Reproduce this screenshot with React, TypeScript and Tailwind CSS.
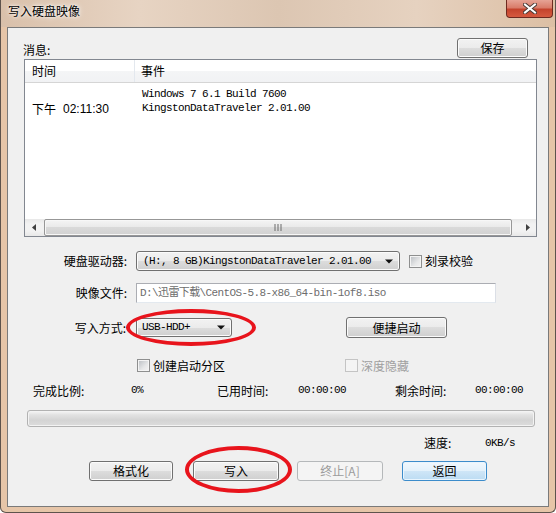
import React from "react";

const mono =
  "font-['Liberation_Mono','Noto_Sans_CJK_SC',monospace] text-[11px] tracking-[-0.6px] leading-none";

type BtnProps = {
  children: React.ReactNode;
  className?: string;
  variant?: "normal" | "default" | "disabled";
};

const WinButton: React.FC<BtnProps> = ({ children, className = "", variant = "normal" }) => {
  const look =
    variant === "default"
      ? "border-[#3c8ccb] bg-[linear-gradient(#f1f8fd_0%,#e3f1fb_50%,#cfe6f7_50%,#bcdcf3_100%)] shadow-[inset_0_0_0_1px_#e9f5fe]"
      : variant === "disabled"
      ? "border-[#b5b8ba] bg-[#f4f4f4] text-[#9c9c9c]"
      : "border-[#707070] bg-[linear-gradient(#f2f2f2_0%,#ebebeb_50%,#dddddd_50%,#cfcfcf_100%)] shadow-[inset_0_0_0_1px_#fbfbfb]";
  return (
    <div
      className={`flex items-center justify-center rounded-[3px] border text-[12px] leading-none ${look} ${className}`}
    >
      {children}
    </div>
  );
};

const Arrow: React.FC = () => (
  <svg width="8" height="5" viewBox="0 0 8 5" className="ml-auto shrink-0">
    <path d="M0 0.5h8L4 4.5z" fill="#111" />
  </svg>
);

const Check: React.FC<{ disabled?: boolean }> = ({ disabled }) => (
  <span
    className={`block h-[13px] w-[13px] shrink-0 border ${
      disabled
        ? "border-[#c4c4c4] bg-[#f4f4f4]"
        : "border-[#8e8f8f] bg-[linear-gradient(135deg,#b8bcc1,#e6e7e8_60%,#f4f4f4)] shadow-[inset_0_0_0_1px_#f4f4f4]"
    }`}
  />
);

const App: React.FC = () => {
  return (
    <div className="relative h-[513px] w-[556px] overflow-hidden rounded-b-[6px] border-x border-b border-[#5e534c] bg-[#e6c5a8] font-['Noto_Sans_CJK_SC',sans-serif] text-black">
      {/* title bar */}
      <div className="flex h-[27px] items-start bg-[linear-gradient(90deg,#d9c0aa,#e7d4c3_25%,#dcc6b2_50%,#e6d2c0_75%,#dcbfa4)]">
        <div className="pl-[7px] pt-[4px] text-[12px] leading-[14px] [text-shadow:0_0_6px_#fff,0_0_3px_#fff]">
          写入硬盘映像
        </div>
        <div className="ml-auto mr-[2px] flex h-[18px] w-[47px] items-center justify-center rounded-b-[4px] border border-t-0 border-[#6e2a20] bg-[linear-gradient(#e6a395_0%,#d97c6a_45%,#c4432d_55%,#d65a40_100%)]">
          <svg width="14" height="11" viewBox="0 0 14 11">
            <path d="M2 1.5l10 8M12 1.5l-10 8" stroke="#4a3a36" strokeWidth="4" strokeLinecap="square" />
            <path d="M2 1.5l10 8M12 1.5l-10 8" stroke="#fff" strokeWidth="2" strokeLinecap="square" />
          </svg>
        </div>
      </div>

      {/* client area */}
      <div className="relative ml-[6px] flex h-[480px] w-[542px] flex-col border border-[#7a7a7a] bg-[#f0f0f0] text-[12px] leading-none">
        {/* message label + save */}
        <div className="mt-[10px] flex h-[20px] items-center pl-[15px] pr-[20px]">
          <span className="mt-[4px]">消息:</span>
          <WinButton className="ml-auto h-[20px] w-[71px]">保存</WinButton>
        </div>

        {/* list view */}
        <div className="ml-[16px] mt-[1px] flex h-[178px] w-[513px] flex-col border border-[#828790] bg-white">
          <div className="flex h-[23px] items-center border-b border-[#d5d5d5] bg-[linear-gradient(#ffffff,#ffffff_50%,#f4f5f6_50%,#f1f2f4)]">
            <div className="flex h-full w-[110px] items-center border-r border-[#e3e8ee] pl-[7px]">时间</div>
            <div className="pl-[6px]">事件</div>
          </div>
          <div className="mt-[3px] flex h-[15px] items-center pt-[2px]">
            <div className="w-[110px]" />
            <div className={`pl-[7px] ${mono}`}>Windows 7 6.1 Build 7600</div>
          </div>
          <div className="flex h-[15px] items-center">
            <div className="flex w-[110px] items-center pl-[7px]">
              <span>下午</span>
              <span className="ml-[7px] font-['Liberation_Sans',sans-serif] text-[12px]">02:11:30</span>
            </div>
            <div className={`pl-[7px] ${mono}`}>KingstonDataTraveler 2.01.00</div>
          </div>
          <div className="flex-1" />
          {/* horizontal scrollbar */}
          <div className="flex h-[17px] bg-[linear-gradient(#e8e8e8,#f2f2f2_30%,#f2f2f2_70%,#e8e8e8)]">
            <div className="flex w-[17px] items-center justify-center">
              <svg width="4" height="7" viewBox="0 0 4 7">
                <path d="M4 0v7L0 3.5z" fill="#3f3f3f" />
              </svg>
            </div>
            <div className="ml-[2px] mr-[7px] flex flex-1 items-center justify-center rounded-[2px] border border-[#979797] bg-[linear-gradient(#f4f4f4,#e9e9e9_50%,#d9d9d9_50%,#d2d2d2)] shadow-[inset_0_0_0_1px_#f7f7f7]">
              <svg width="8" height="7" viewBox="0 0 8 7">
                <path d="M1 0v7M4 0v7M7 0v7" stroke="#6b6b6b" strokeWidth="1" />
              </svg>
            </div>
            <div className="flex w-[17px] items-center justify-center">
              <svg width="4" height="7" viewBox="0 0 4 7">
                <path d="M0 0v7L4 3.5z" fill="#3f3f3f" />
              </svg>
            </div>
          </div>
        </div>

        {/* drive */}
        <div className="mt-[14px] flex h-[20px] items-center">
          <div className="w-[119px] text-right">硬盘驱动器:</div>
          <div className="ml-[9px] flex h-[20px] w-[264px] items-center rounded-[3px] border border-[#707070] bg-[linear-gradient(#f2f2f2_0%,#ebebeb_50%,#dddddd_50%,#cfcfcf_100%)] pl-[6px] pr-[6px] shadow-[inset_0_0_0_1px_#fbfbfb]">
            <span className={mono}>(H:, 8 GB)KingstonDataTraveler 2.01.00</span>
            <Arrow />
          </div>
          <div className="ml-[9px] flex items-center gap-[3px]">
            <Check />
            <span>刻录校验</span>
          </div>
        </div>

        {/* image file */}
        <div className="mt-[12px] flex h-[20px] items-center">
          <div className="w-[119px] text-right">映像文件:</div>
          <div className="ml-[9px] flex h-[20px] w-[360px] items-center border border-[#abadb3] border-b-[#e3e9ef] border-r-[#dbdfe6] bg-white pl-[3px]">
            <span className={`${mono} text-[#6d6d6d]`}>D:\迅雷下载\CentOS-5.8-x86_64-bin-1of8.iso</span>
          </div>
        </div>

        {/* write mode */}
        <div className="mt-[14px] flex h-[21px] items-center">
          <div className="w-[118px] text-right">写入方式:</div>
          <div className="ml-[10px] flex h-[19px] w-[96px] items-center rounded-[3px] border border-[#707070] bg-[linear-gradient(#f2f2f2_0%,#ebebeb_50%,#dddddd_50%,#cfcfcf_100%)] pl-[5px] pr-[6px] shadow-[inset_0_0_0_1px_#fbfbfb]">
            <span className={mono}>USB-HDD+</span>
            <Arrow />
          </div>
          <WinButton className="ml-[114px] h-[21px] w-[101px]">便捷启动</WinButton>
        </div>

        {/* options */}
        <div className="mt-[21px] flex h-[13px] items-center pl-[129px]">
          <div className="flex w-[208px] items-center gap-[3px]">
            <Check />
            <span>创建启动分区</span>
          </div>
          <div className="flex items-center gap-[3px] text-[#a0a0a0]">
            <Check disabled />
            <span>深度隐藏</span>
          </div>
        </div>

        {/* stats */}
        <div className="mt-[12px] flex h-[13px] items-center pl-[25px]">
          <div className="w-[98px]">完成比例:</div>
          <div className={`w-[86px] ${mono}`}>0%</div>
          <div className="w-[81px]">已用时间:</div>
          <div className={`w-[97px] ${mono}`}>00:00:00</div>
          <div className="w-[80px]">剩余时间:</div>
          <div className={mono}>00:00:00</div>
        </div>

        {/* progress */}
        <div className="ml-[19px] mt-[13px] h-[17px] w-[508px] rounded-[3px] border border-[#b2b2b2] bg-[linear-gradient(#f6f6f6,#e2e2e2_25%,#d4d4d4_60%,#dcdcdc)] shadow-[inset_0_0_0_1px_#f3f3f3]" />

        {/* speed */}
        <div className="mt-[10px] flex h-[12px] items-center pl-[416px]">
          <div className="w-[61px]">速度:</div>
          <div className={mono}>0KB/s</div>
        </div>

        {/* buttons */}
        <div className="mt-[12px] flex h-[20px] items-center pl-[81px]">
          <WinButton className="h-[20px] w-[84px]">格式化</WinButton>
          <WinButton className="ml-[20px] h-[20px] w-[86px]">写入</WinButton>
          <WinButton variant="disabled" className="ml-[18px] h-[20px] w-[86px] font-['Noto_Sans_CJK_SC',sans-serif]">
            终止[A]
          </WinButton>
          <WinButton variant="default" className="ml-[19px] h-[20px] w-[85px]">
            返回
          </WinButton>
        </div>

        {/* red marks drawn over the dialog */}
        <div className="pointer-events-none absolute left-[118px] top-[281px] h-[37px] w-[130px] rounded-[50%] border-[4px] border-[#e8141c]" />
        <div className="pointer-events-none absolute left-[177px] top-[418px] h-[47px] w-[107px] rounded-[50%] border-[4px] border-[#e8141c]" />
      </div>
    </div>
  );
};

export default App;
